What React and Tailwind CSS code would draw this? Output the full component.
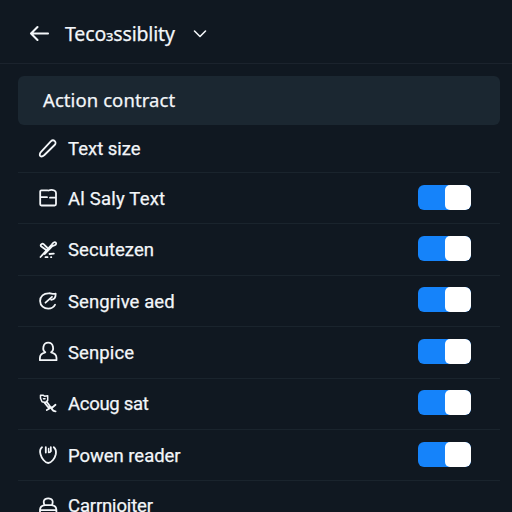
import React from 'react';

function Icon({ children }) {
  return (
    <svg className="h-6 w-6 shrink-0" viewBox="0 0 24 24" fill="none" stroke="currentColor" strokeWidth="1.8" strokeLinecap="round" strokeLinejoin="round">
      {children}
    </svg>
  );
}

const PencilIcon = () => (
  <Icon>
    <path d="M4.800 15.200 14.800 4.400c1.200-1.200 2.900-1.300 4-.3s1 2.700-.2 3.900L8.400 18c-1.200 1.100-3.200 1.800-4.100 1.100s-.6-2.800.5-3.900Z" />
  </Icon>
);
const LayoutIcon = () => (
  <Icon>
    <path d="M11.500 4.300H5.300Q4.200 4.300 4.200 5.400V18.300Q4.200 19.500 5.400 19.500H18.600Q20 19.500 20 18V7Q20 5.300 18.300 4.500 15.500 3.300 12.500 4.500M4.500 11.200H11M14 11.700H19.500" />
  </Icon>
);
const ToolsIcon = () => (
  <Icon>
    <path d="M4.500 19 15.800 6.500C16.600 5.300 17.500 4 18.900 4.200 20.800 4.600 20.500 7.100 18.300 7.400L16.300 8.200 8.800 16M9.500 11.500 5 8.200C4 6.500 6.300 5 7.600 6.200L11 9.500M13.500 16 17.800 15.600M9.500 19.200H11.500M15 19.200H15.300" />
  </Icon>
);
const SwirlIcon = () => (
  <Icon>
    <path d="M13 4.300C7.700 4 4 7.500 4.100 12c.1 4.800 3.900 7.700 8.200 7.700 3.200 0 5.500-1.500 6.800-4M13 4.300C15 4 17 5.700 19.700 4.700c0 3.200-1.800 5.800-4.500 6.200M16 7.800 9.500 13.700" />
  </Icon>
);
const PersonIcon = () => (
  <Icon>
    <path d="M9.300 12.300C6 10.200 6.700 2.700 12.200 2.700s6.200 7.500 2.900 9.600c2.900.6 5.400 2.500 5.400 5.700v2.200H3.900V18c0-3.200 2.500-5.100 5.400-5.700Z" />
  </Icon>
);
const WrenchIcon = () => (
  <Icon>
    <path strokeWidth="1.5" d="M4.500 6.200V3.200H7L8.500 4.200 11.700 3.700V8.500L9.500 10.500 6 9.700 4.500 6.200ZM7.500 6.800H9" />
    <path d="M10.500 9.500C12.500 12 13.800 14 15.300 16.300 16.300 18 17.800 19.500 19.600 19.400M8.500 10.600 13 16.200M19.500 12.800 16.300 15.500 13.500 14.500M13.500 16.500 10.800 18" />
  </Icon>
);
const TulipIcon = () => (
  <Icon>
    <path d="M6 4.200C4.100 5.700 3.700 8.300 4.500 11.200 5.600 15.300 8.800 19.700 12.200 20 15.700 19.700 18.900 15.300 19.800 11.200c.5-2.700-.2-5.500-2-7M9.800 4.200V9.500M14.800 4.200V8" />
    <path strokeWidth="1.500" d="M14.800 8Q14.500 9.700 12.600 9.500V5.500" />
  </Icon>
);
const StampIcon = () => (
  <Icon>
    <path d="M8.500 10.200C7 6.700 7.500 3.400 12.200 3.400S17.400 6.700 16 10.200M8.500 10.200H16C19 10.700 20.400 12.700 20.400 15.200H4C4 12.700 5.500 10.700 8.500 10.200ZM4 15.200V19.500H20.400V15.200" />
  </Icon>
);

function Toggle() {
  return (
    <span className="flex h-[25px] w-[53px] overflow-hidden rounded-[6px] bg-[#1583fa]" role="switch" aria-checked="true">
      <span className="ml-auto h-full w-[26px] rounded-[5px] bg-white" />
    </span>
  );
}

const rows = [
  { label: 'Al Saly Text', icon: LayoutIcon, spacing: 'tracking-[0.2px]' },
  { label: 'Secutezen', icon: ToolsIcon, spacing: 'tracking-[0.05px]' },
  { label: 'Sengrive aed', icon: SwirlIcon, spacing: 'tracking-[0.08px]' },
  { label: 'Senpice', icon: PersonIcon, spacing: 'tracking-[0.1px]' },
  { label: 'Acoug sat', icon: WrenchIcon, spacing: 'tracking-[-0.3px]' },
  { label: 'Powen reader', icon: TulipIcon, spacing: 'tracking-[-0.05px]' },
];

export default function App() {
  return (
    <main className="h-[512px] w-[512px] overflow-hidden bg-[#101821] font-['Roboto',sans-serif] text-[#f3f6f9] [-webkit-text-stroke:0.25px_#f3f6f9]">
      <header className="flex h-16 items-center border-b border-[#1b232d] pt-1 pl-[29px]">
        <svg className="h-5 w-[21px]" viewBox="0 0 21 20" fill="none" stroke="currentColor" strokeWidth="2.100" strokeLinecap="round" strokeLinejoin="round">
          <path d="M19 9.500H2M8.500 3 2 9.500 8.500 16" />
        </svg>
        <h1 className="ml-[15px] w-[112px] pt-px font-['Noto_Sans',sans-serif] text-[19.5px] leading-6 tracking-[-0.15px] whitespace-nowrap">
          Teco<span className="text-[15px]">ɜ</span>ssiblity
        </h1>
        <svg className="ml-[16px] h-3 w-[14px]" viewBox="0 0 14 12" fill="none" stroke="currentColor" strokeWidth="1.600" strokeLinecap="round" strokeLinejoin="round">
          <path d="m1.500 3 5.500 5.500L12.500 3" />
        </svg>
      </header>
      <section className="mr-3 ml-[18px] pt-3">
        <div className="flex h-[49px] items-center rounded-md bg-[#1b2731] pb-0.5 pl-[25px] font-['Noto_Sans',sans-serif] text-[18.5px] tracking-[0.08px]">Action contract</div>
        <div className="flex h-12 items-center border-b border-[#1a242d] pl-[18px]">
          <PencilIcon />
          <span className="ml-2 pt-[3px] text-[18.5px]">Text size</span>
        </div>
        {rows.map(({ label, icon: RowIcon, spacing }) => (
          <div key={label} className="flex h-[51.4px] items-center border-b border-[#1a242d] pr-[29px] pl-[18px]">
            <RowIcon />
            <span className={`ml-2 pt-[3px] text-[18.5px] whitespace-nowrap ${spacing}`}>{label}</span>
            <span className="ml-auto pb-[2px]"><Toggle /></span>
          </div>
        ))}
        <div className="flex h-[51.4px] items-center pl-[18px]">
          <StampIcon />
          <span className="ml-2 text-[18.5px] tracking-[-0.15px]">Carrnjoiter</span>
        </div>
      </section>
    </main>
  );
}
